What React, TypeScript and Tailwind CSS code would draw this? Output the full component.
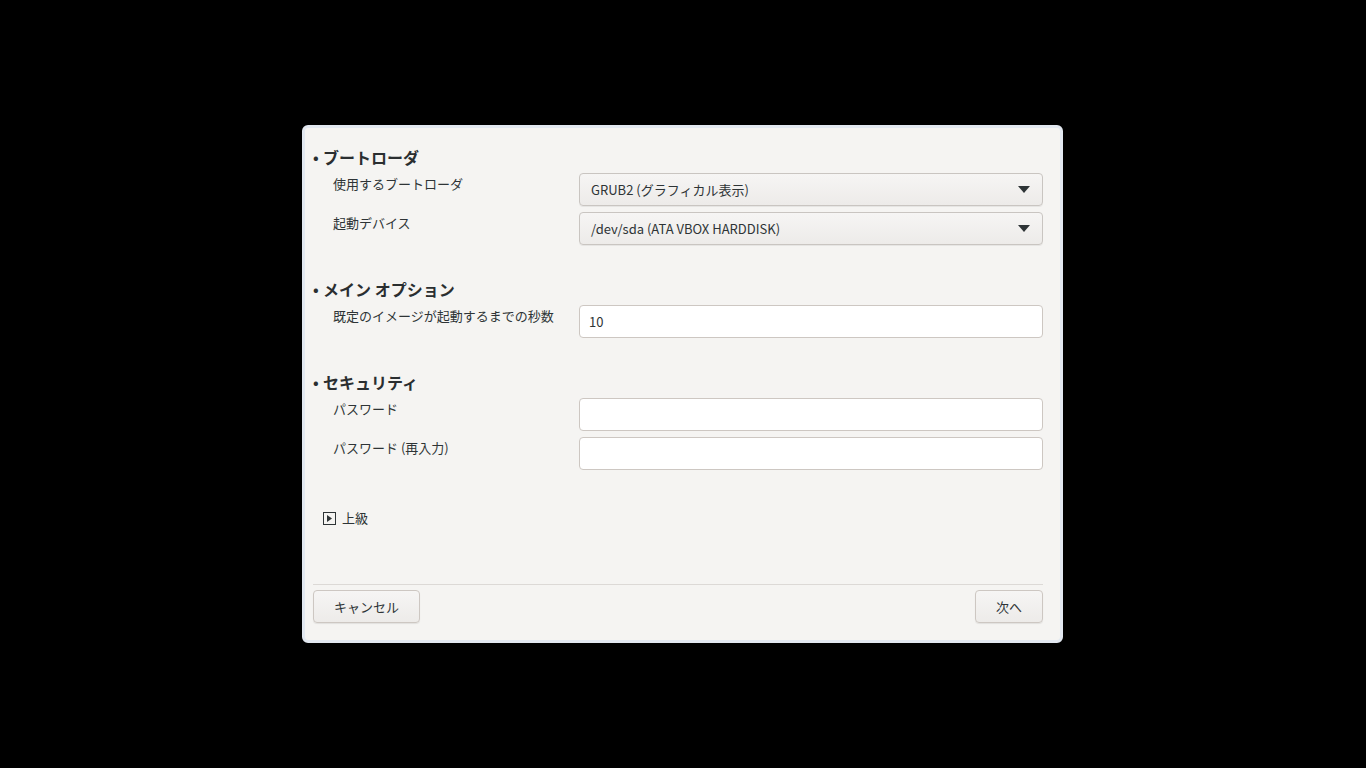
const font = "font-['Noto_Sans_CJK_JP','Noto_Sans',sans-serif]"

function Combo({ value }: { value: string }) {
  return (
    <div className="flex h-[33px] items-center justify-between rounded-[4px] border border-[#c9c5c1] bg-gradient-to-b from-[#f6f5f4] to-[#edebe9] pl-[11px] pr-[11px] text-[13px] text-[#2e3436] shadow-[0_1px_0_rgba(0,0,0,0.06)]">
      <span>{value}</span>
      <svg width="12" height="7" viewBox="0 0 12 7" className="mr-[1px]">
        <path d="M0 0h12L6 7z" fill="#2e3436" />
      </svg>
    </div>
  )
}

function Entry({ value }: { value?: string }) {
  return (
    <div className="flex h-[33px] items-center rounded-[4px] border border-[#cdc7c2] bg-white pl-[9px] text-[13px] text-[#2e3436]">
      {value}
    </div>
  )
}

function Heading({ text }: { text: string }) {
  return (
    <div className="mb-[6px] flex h-[20px] items-center text-[16px] font-bold leading-[20px] text-[#2a2e30]">
      <span className="w-[10px] text-[15px]">•</span>
      <span>{text}</span>
    </div>
  )
}

function Row({ label, children }: { label: string; children: React.ReactNode }) {
  return (
    <div className="grid grid-cols-[246px_1fr] pl-[20px]">
      <div className="pt-[1px] text-[13px] leading-[20px] text-[#2e3436]">{label}</div>
      {children}
    </div>
  )
}

function Button({ label, width }: { label: string; width: string }) {
  return (
    <button
      className={`flex h-[33px] items-center justify-center rounded-[4px] border border-[#cdc7c2] bg-gradient-to-b from-[#f6f5f4] to-[#edebe9] text-[13px] text-[#2e3436] shadow-[0_1px_1px_rgba(0,0,0,0.08)] ${width}`}
    >
      {label}
    </button>
  )
}

export default function App() {
  return (
    <div className={`flex h-[768px] w-full items-start bg-black pl-[302px] pt-[125px] ${font}`}>
      <div className="flex h-[518px] w-[761px] flex-col rounded-[6px] border-[3px] border-[#e2e8f0] bg-[#f5f4f2] pb-[17px] pl-[8px] pr-[17px] pt-[19px]">
        {/* Boot loader */}
        <Heading text="ブートローダ" />
        <div className="flex flex-col gap-[6px]">
          <Row label="使用するブートローダ">
            <Combo value="GRUB2 (グラフィカル表示)" />
          </Row>
          <Row label="起動デバイス">
            <Combo value="/dev/sda (ATA VBOX HARDDISK)" />
          </Row>
        </div>

        {/* Main options */}
        <div className="mt-[34px]">
          <Heading text="メイン オプション" />
          <Row label="既定のイメージが起動するまでの秒数">
            <Entry value="10" />
          </Row>
        </div>

        {/* Security */}
        <div className="mt-[34px]">
          <Heading text="セキュリティ" />
          <div className="flex flex-col gap-[6px]">
            <Row label="パスワード">
              <Entry />
            </Row>
            <Row label="パスワード (再入力)">
              <Entry />
            </Row>
          </div>
        </div>

        {/* Advanced expander */}
        <div className="mt-[38px] flex items-center gap-[6px] pl-[10px] text-[13px] leading-[20px] text-[#2e3436]">
          <svg width="13" height="13" viewBox="0 0 13 13">
            <rect x="0.5" y="0.5" width="12" height="12" fill="none" stroke="#2e3436" />
            <path d="M4 3l5 3.5L4 10z" fill="#2e3436" />
          </svg>
          <span>上級</span>
        </div>

        <div className="flex-1" />

        <div className="h-px bg-[#dcd9d6]" />
        <div className="mt-[5px] flex justify-between">
          <Button label="キャンセル" width="w-[107px]" />
          <Button label="次へ" width="w-[68px]" />
        </div>
      </div>
    </div>
  )
}
